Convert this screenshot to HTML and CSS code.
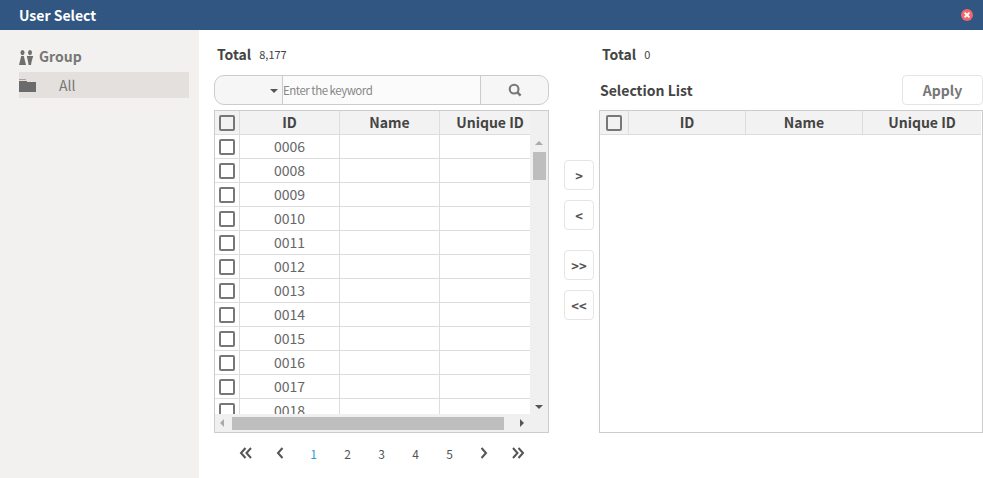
FILE: index.html
```html
<!DOCTYPE html>
<html>
<head>
	<title>User Select</title>
	<meta charset="UTF-8">
	<link rel="stylesheet" href="styles.css">
</head>
<body>
	<div class="popup">
		<div class="popup-head">
			<span class="popup-title">User Select</span>
			<svg class="close-icon" width="14" height="14" viewBox="0 0 14 14"><circle cx="7" cy="7" r="6" fill="#ef666c"/><path d="M4.6 4.6l4.8 4.8M9.4 4.6l-4.8 4.8" stroke="#fff" stroke-width="2"/></svg>
		</div>
		<div class="popup-body">
			<div class="side">
				<div class="side-title">
					<svg width="15" height="15" viewBox="0 0 15 15" fill="#6f6f6f"><ellipse cx="3.500" cy="2.600" rx="2" ry="2.600"/><ellipse cx="11" cy="2.600" rx="2" ry="2.600"/><path d="M2.200 6h2.600L7 15H0z"/><path d="M7.800 6h6.400l-1.600 5.500-.6 3.500H9.600L9 11.500z"/></svg>
					<span>Group</span>
				</div>
				<div class="tree-item">
					<svg width="17" height="13" viewBox="0 0 17 13" fill="#6b6b6b"><path d="M0 0h7v1H0z" opacity=".5"/><path d="M0 3h17v10H0z"/><path d="M0 2h8v1H0z"/></svg>
					<span>All</span>
				</div>
			</div>
			<div class="main">
				<div class="list-col">
					<div class="total"><b>Total</b><span>8,177</span></div>
					<div class="search">
						<div class="search-select"><i class="caret"></i></div>
						<input class="search-input" type="text" placeholder="Enter the keyword">
						<div class="search-btn">
							<svg width="14" height="14" viewBox="0 0 16 16" fill="none" stroke="#777"><circle cx="7" cy="7" r="5" stroke-width="2.400"/><path d="M10.800 10.800l3.600 3.600" stroke-width="2.800"/></svg>
						</div>
					</div>
					<div class="grid">
						<div class="grid-top">
							<div class="grid-view">
								<table class="tbl tbl-left">
									<thead>
										<tr><th class="chk-cell"><i class="chk"></i></th><th>ID</th><th>Name</th><th>Unique ID</th></tr>
									</thead>
									<tbody>
										<tr><td class="chk-cell"><i class="chk"></i></td><td>0006</td><td></td><td></td></tr>
										<tr><td class="chk-cell"><i class="chk"></i></td><td>0008</td><td></td><td></td></tr>
										<tr><td class="chk-cell"><i class="chk"></i></td><td>0009</td><td></td><td></td></tr>
										<tr><td class="chk-cell"><i class="chk"></i></td><td>0010</td><td></td><td></td></tr>
										<tr><td class="chk-cell"><i class="chk"></i></td><td>0011</td><td></td><td></td></tr>
										<tr><td class="chk-cell"><i class="chk"></i></td><td>0012</td><td></td><td></td></tr>
										<tr><td class="chk-cell"><i class="chk"></i></td><td>0013</td><td></td><td></td></tr>
										<tr><td class="chk-cell"><i class="chk"></i></td><td>0014</td><td></td><td></td></tr>
										<tr><td class="chk-cell"><i class="chk"></i></td><td>0015</td><td></td><td></td></tr>
										<tr><td class="chk-cell"><i class="chk"></i></td><td>0016</td><td></td><td></td></tr>
										<tr><td class="chk-cell"><i class="chk"></i></td><td>0017</td><td></td><td></td></tr>
										<tr><td class="chk-cell"><i class="chk"></i></td><td>0018</td><td></td><td></td></tr>
									</tbody>
								</table>
							</div>
							<div class="vbar">
								<i class="arr arr-up"></i>
								<div class="vbar-thumb"></div>
								<i class="arr arr-down"></i>
							</div>
						</div>
						<div class="hbar">
							<i class="arr arr-left"></i>
							<div class="hbar-thumb"></div>
							<i class="arr arr-right"></i>
						</div>
					</div>
					<div class="pager">
						<a><svg width="14" height="12" viewBox="0 0 14 12"><path d="M6.500 1L2 6l4.500 5M12 1L7.500 6l4.500 5" fill="none" stroke="#555" stroke-width="2"/></svg></a>
						<a><svg width="8" height="12" viewBox="0 0 8 12"><path d="M6.500 1L2 6l4.500 5" fill="none" stroke="#555" stroke-width="2"/></svg></a>
						<a class="on">1</a>
						<a>2</a>
						<a>3</a>
						<a>4</a>
						<a>5</a>
						<a><svg width="8" height="12" viewBox="0 0 8 12"><path d="M1.500 1L6 6l-4.500 5" fill="none" stroke="#555" stroke-width="2"/></svg></a>
						<a><svg width="14" height="12" viewBox="0 0 14 12"><path d="M2 1l4.500 5L2 11M7.500 1L12 6l-4.500 5" fill="none" stroke="#555" stroke-width="2"/></svg></a>
					</div>
				</div>
				<div class="move-col">
					<button class="move-btn">&gt;</button>
					<button class="move-btn">&lt;</button>
					<button class="move-btn move-all">&gt;&gt;</button>
					<button class="move-btn">&lt;&lt;</button>
				</div>
				<div class="sel-col">
					<div class="total total-right"><b>Total</b><span>0</span></div>
					<div class="sel-head">
						<b>Selection List</b>
						<button class="apply-btn">Apply</button>
					</div>
					<div class="grid grid-right">
						<table class="tbl tbl-right">
							<thead>
								<tr><th class="chk-cell"><i class="chk"></i></th><th>ID</th><th>Name</th><th>Unique ID</th></tr>
							</thead>
						</table>
					</div>
				</div>
			</div>
		</div>
	</div>
</body>
</html>
```

FILE: styles.css
```css
*{
	margin: 0;
	padding: 0;
	box-sizing: border-box;
}
body{
	background: #fff;
	font-family: "Noto Sans CJK KR", "Noto Sans", sans-serif;
	color: #444;
	overflow: hidden;
}
.popup{
	width: 983px;
	height: 478px;
	display: flex;
	flex-direction: column;
}
.popup-head{
	height: 30px;
	flex: none;
	background: #315682;
	display: flex;
	align-items: center;
	justify-content: space-between;
	padding: 0 9px 0 19px;
}
.popup-title{
	color: #fff;
	font-size: 14px;
	font-weight: 700;
	line-height: 30px;
}
.popup-body{
	flex: 1;
	display: flex;
	min-height: 0;
}
.side{
	width: 199px;
	flex: none;
	background: #f2f1f0;
	padding: 16px 10px 0 19px;
}
.side-title{
	display: flex;
	align-items: center;
	gap: 5px;
	height: 22px;
	color: #777;
	font-size: 14px;
	font-weight: 700;
	line-height: 18px;
}
.side-title span{
	margin-top: -3px;
}
.tree-item{
	margin-top: 4px;
	height: 26px;
	background: #e3e0de;
	display: flex;
	align-items: center;
	gap: 23px;
	font-size: 14px;
	color: #777;
}
.main{
	flex: 1;
	display: flex;
	padding-left: 15px;
}
.list-col{
	width: 335px;
	flex: none;
}
.total{
	height: 45px;
	padding: 0 0 11px 3px;
	display: flex;
	align-items: flex-end;
	gap: 8px;
	color: #444;
}
.total b{
	font-size: 14px;
	font-weight: 700;
	line-height: 20px;
}
.total span{
	font-size: 11px;
	line-height: 20px;
}
.search{
	height: 30px;
	border: 1px solid #ccc;
	border-radius: 10px;
	background: #f6f6f6;
	display: flex;
	overflow: hidden;
}
.search-select{
	width: 68px;
	flex: none;
	border-right: 1px solid #ccc;
	position: relative;
}
.caret{
	position: absolute;
	right: 4px;
	top: 13px;
	border: 4px solid transparent;
	border-top: 4px solid #555;
	border-bottom: 0;
}
.search-input{
	flex: 1;
	min-width: 0;
	border: 0;
	background: #fbfbfb;
	font: 11.5px "Noto Sans CJK KR", "Noto Sans", sans-serif;
	letter-spacing: -0.5px;
	outline: none;
}
.search-input::placeholder{
	color: #888;
}
.search-btn{
	width: 68px;
	flex: none;
	border-left: 1px solid #ccc;
	display: flex;
	align-items: center;
	justify-content: center;
}
.grid{
	margin-top: 5px;
	height: 323px;
	border: 1px solid #ccc;
	display: flex;
	flex-direction: column;
}
.grid-top{
	flex: 1;
	display: flex;
	min-height: 0;
}
.grid-view{
	flex: 1;
	min-width: 0;
	overflow: hidden;
}
.tbl{
	border-collapse: separate;
	border-spacing: 0;
	table-layout: fixed;
}
.tbl-left{
	width: 325px;
}
.tbl-left th:nth-child(1){ width: 25px; }
.tbl-left th:nth-child(2){ width: 100px; }
.tbl-left th:nth-child(3){ width: 100px; }
.tbl-right{
	width: 381px;
}
.tbl-right th:nth-child(1){ width: 29px; }
.tbl-right th:nth-child(2){ width: 117px; }
.tbl-right th:nth-child(3){ width: 117px; }
.tbl th{
	height: 24px;
	padding-bottom: 2px;
	background: #f2f2f2;
	border-right: 1px solid #ddd;
	border-bottom: 1px solid #ddd;
	font-size: 14px;
	font-weight: 700;
	color: #444;
	line-height: 20px;
}
.tbl th.chk-cell{
	padding-bottom: 0;
}
.tbl th:last-child{
	border-right: 0;
}
.tbl td{
	height: 24px;
	padding-bottom: 2px;
	border-right: 1px solid #ddd;
	border-bottom: 1px solid #ddd;
	text-align: center;
	font-size: 14px;
	color: #666;
	line-height: 20px;
}
.tbl td.chk-cell{
	padding-bottom: 0;
}
.tbl td:last-child{
	border-right: 0;
}
.chk{
	display: block;
	width: 16px;
	height: 16px;
	margin: 0 auto;
	border: 2px solid #777;
	border-radius: 2px;
	background: #fff;
}
th .chk{
	background: #f2f2f2;
}
.vbar{
	width: 18px;
	flex: none;
	background: #f0f0f0;
	position: relative;
}
.vbar-thumb{
	position: absolute;
	left: 3px;
	top: 41px;
	width: 13px;
	height: 28px;
	background: #bebebe;
}
.hbar{
	height: 18px;
	flex: none;
	background: #f0f0f0;
	position: relative;
}
.hbar-thumb{
	position: absolute;
	left: 17px;
	top: 3px;
	width: 272px;
	height: 13px;
	background: #bebebe;
}
.arr{
	position: absolute;
	width: 0;
	height: 0;
	border: 4px solid transparent;
}
.arr-up{
	left: 5px;
	top: 30px;
	border-top: 0;
	border-bottom: 4px solid #aaa;
}
.arr-down{
	left: 5px;
	bottom: 5px;
	border-bottom: 0;
	border-top: 4px solid #555;
}
.arr-left{
	left: 5px;
	top: 5px;
	border-left: 0;
	border-right: 4px solid #aaa;
}
.arr-right{
	left: 305px;
	top: 5px;
	border-right: 0;
	border-left: 4px solid #555;
}
.pager{
	display: flex;
	justify-content: center;
	margin-top: 9px;
	height: 22px;
}
.pager a{
	width: 34px;
	display: flex;
	align-items: center;
	justify-content: center;
	font-size: 12px;
	color: #555;
}
.pager .on{
	color: #2a9bd8;
}
.move-col{
	width: 50px;
	flex: none;
	padding: 130px 0 0 15px;
}
.move-btn{
	display: block;
	width: 30px;
	height: 30px;
	margin-bottom: 10px;
	border: 1px solid #e5e5e5;
	border-radius: 4px;
	background: #fff;
	font: 700 13px "Noto Sans CJK KR", "Noto Sans", sans-serif;
	color: #555;
}
.move-all{
	margin-top: 20px;
}
.sel-col{
	width: 384px;
	flex: none;
}
.sel-head{
	height: 30px;
	display: flex;
	align-items: center;
	justify-content: space-between;
	padding-left: 1px;
	font-size: 14px;
}
.sel-head b{
	font-weight: 700;
}
.apply-btn{
	width: 81px;
	height: 30px;
	border: 1px solid #e5e5e5;
	border-radius: 4px;
	background: #fff;
	font: 700 14px "Noto Sans CJK KR", "Noto Sans", sans-serif;
	color: #777;
}
.grid-right{
	display: block;
}
```
